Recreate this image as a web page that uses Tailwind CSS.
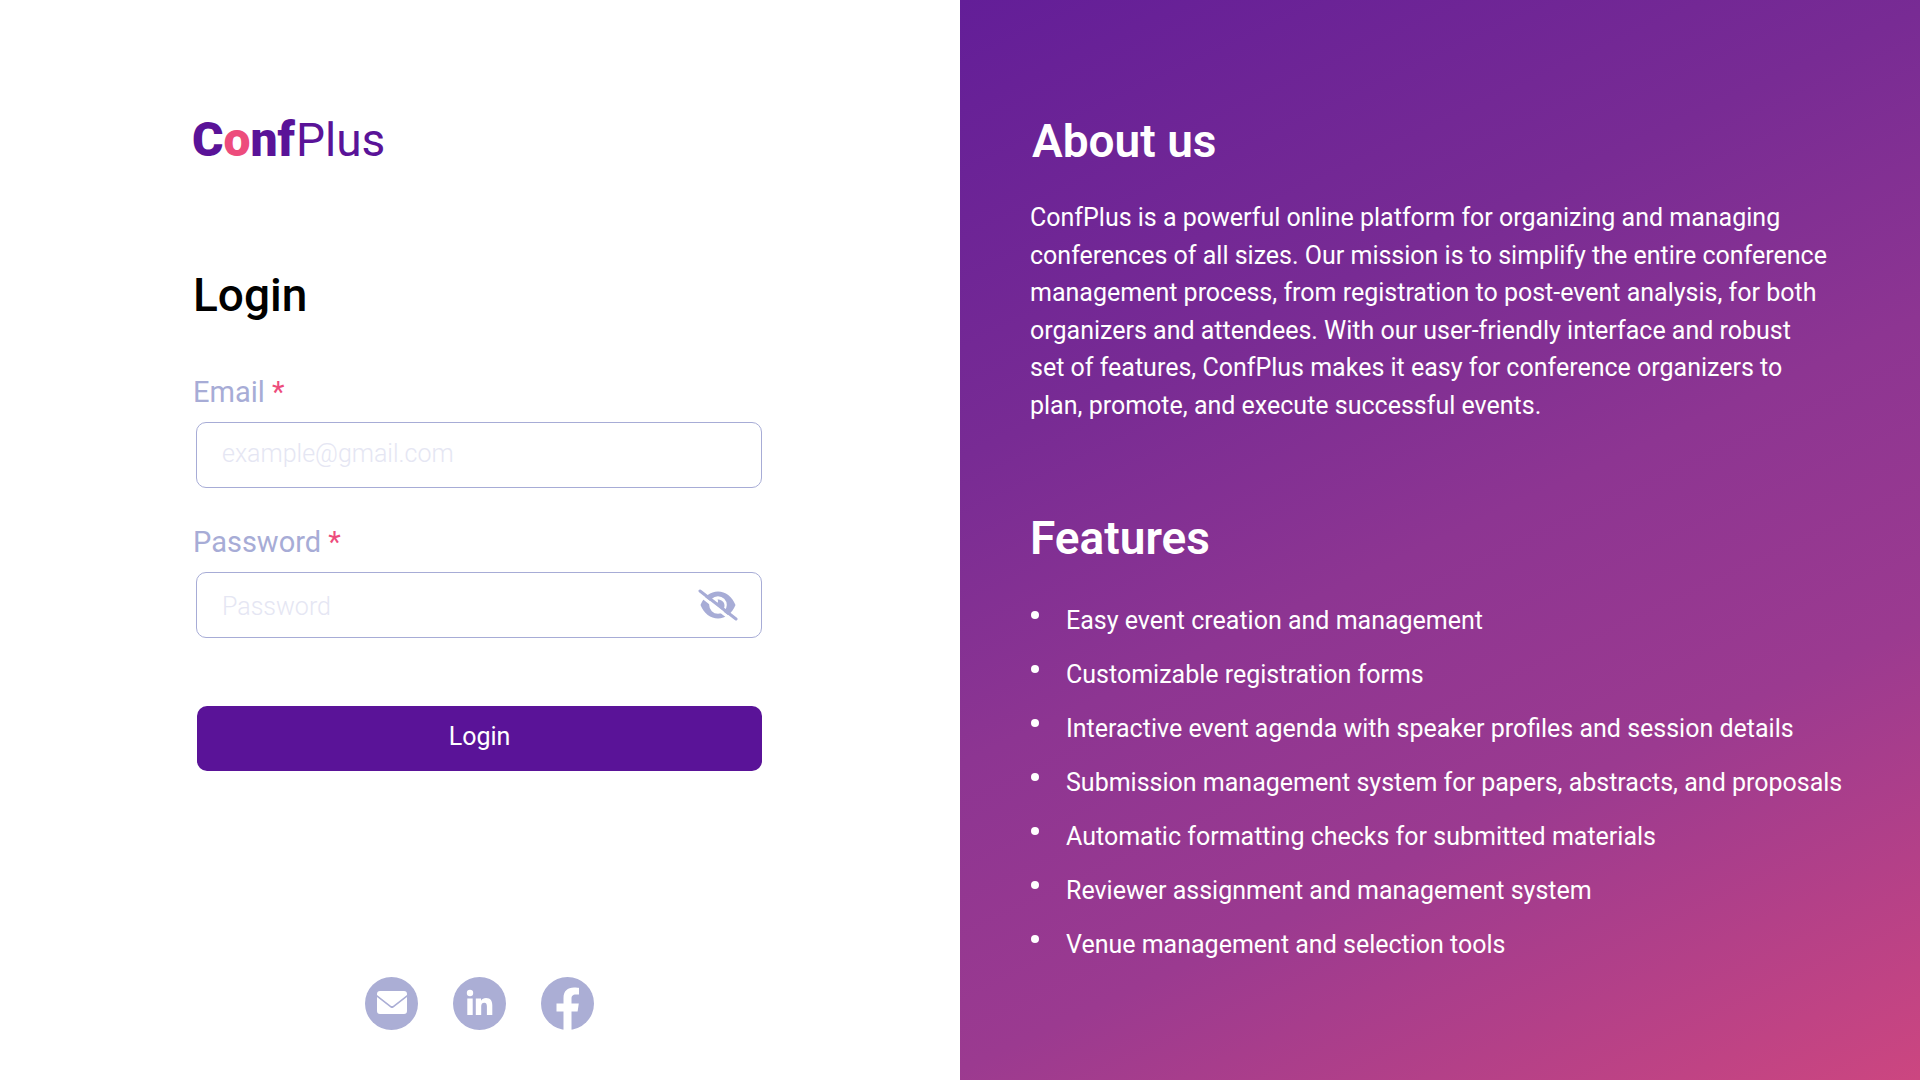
<!DOCTYPE html>
<html lang="en">
<head>
<meta charset="utf-8">
<meta name="viewport" content="width=device-width, initial-scale=1">
<title>ConfPlus – Login</title>
<script src="https://cdn.jsdelivr.net/npm/@tailwindcss/browser@4"></script>
</head>
<body class="bg-white font-[Roboto,sans-serif]">
<div class="grid min-h-screen grid-cols-2">

  <main class="flex flex-col pt-28 pr-[198px] pb-[50px] pl-48">
    <a href="#" aria-label="ConfPlus home" class="flex items-baseline gap-px self-start text-[46px] leading-14 text-[#5a1398]"><span class="text-[48px] font-black">C<span class="text-[#ed4c7c]">o</span>nf</span><span>Plus</span></a>

    <form class="mt-[99px] flex flex-col">
      <h1 class="pl-px text-[46px] leading-14 font-medium text-black">Login</h1>

      <label for="email" class="mt-[51px] pl-px text-[29px] leading-9 text-[#a7acd6]">Email <span class="text-[#ed4c7c]">*</span></label>
      <input id="email" type="email" placeholder="example@gmail.com" class="mt-[12px] ml-1 h-[66px] rounded-[10px] border border-[#a7acd6] px-[25px] pb-1 text-[25px] font-light text-[#5a1398] placeholder:text-[#e5e6f3]">

      <label for="password" class="mt-9 pl-px text-[29px] leading-9 text-[#a7acd6]">Password <span class="text-[#ed4c7c]">*</span></label>
      <div class="mt-[12px] ml-1 flex h-[66px] items-center rounded-[10px] border border-[#a7acd6] pr-[23px] pl-[25px]">
        <input id="password" type="password" placeholder="Password" class="min-w-0 flex-1 pt-1 text-[25px] font-light text-[#5a1398] placeholder:text-[#e5e6f3]">
        <button type="button" aria-label="Show password">
          <svg class="h-8 w-10" viewBox="0 0 40 32">
            <path fill="#a7acd6" fill-rule="evenodd" d="M2.500 16C6 7.500 12.500 2.500 20 2.500S34 7.500 37.500 16C34 24.500 27.500 29.500 20 29.500S6 24.500 2.500 16ZM20 7.200a8.800 8.800 0 1 0 0 17.600a8.800 8.800 0 0 0 0-17.600Z"/>
            <path fill="#a7acd6" d="M19.500 10.500c4 0 7 2.500 7 6 0 2-.8 3.500-2 4.500L16 14c1.500 1 4 .5 4-1.500 0-.8 0-1.400-.5-2Z"/>
            <path stroke="#fff" stroke-width="3" d="M0 4.500L37 33.500"/>
            <path stroke="#a7acd6" stroke-width="3" stroke-linecap="round" d="M2 2L38 30"/>
          </svg>
        </button>
      </div>

      <button type="submit" class="mt-[68px] ml-[5px] h-[65px] rounded-[10px] bg-[#5a1398] pb-1 text-[25px] text-white">Login</button>
    </form>

    <nav aria-label="Contact" class="mt-auto flex justify-center gap-[35px] pl-1">
      <a href="#" aria-label="Email">
        <svg class="size-[53px]" viewBox="0 0 53 53">
          <circle cx="26.500" cy="26.500" r="26.500" fill="#abaed5"/>
          <path fill="#fff" d="M15 14h24a3 3 0 0 1 3 3v1L28.500 28.500q-1.500 1.200-3 0L12 18v-1a3 3 0 0 1 3-3Z"/>
          <path fill="#fff" d="M12 20l13.500 10.500q1.500 1.200 3 0L42 20v14a3 3 0 0 1-3 3H15a3 3 0 0 1-3-3Z"/>
        </svg>
      </a>
      <a href="#" aria-label="LinkedIn">
        <svg class="size-[53px]" viewBox="0 0 53 53">
          <circle cx="26.500" cy="26.500" r="26.500" fill="#abaed5"/>
          <circle cx="17" cy="16" r="3.200" fill="#fff"/>
          <path fill="#fff" d="M14.300 21.500h5.400V38h-5.400ZM22.800 21.500H28v2.300c1-1.700 2.800-2.700 5-2.700 4.800 0 6.300 3 6.300 7.400V38h-5.400v-8.500c0-2.200-.5-3.800-2.600-3.800-2.300 0-3.100 1.600-3.100 3.900V38h-5.400Z"/>
        </svg>
      </a>
      <a href="#" aria-label="Facebook">
        <svg class="size-[53px]" viewBox="0 0 53 53">
          <circle cx="26.500" cy="26.500" r="26.500" fill="#abaed5"/>
          <path fill="#fff" d="M22.500 53V34.500h-7v-8h7v-5.500c0-7 4-10.500 10.500-10.500 2.500 0 5 .4 5 .4v6.500h-3c-3.500 0-4.500 2-4.500 4v5.100h7.300l-1.200 8h-6.100V53Z"/>
        </svg>
      </a>
    </nav>
  </main>

  <aside class="flex flex-col bg-[linear-gradient(155deg,#631e98,#782b94_30%,#8d3592_50%,#9b3a90_70%,#cc4680)] pt-[113px] pr-16 pl-[70px] text-white">
    <section>
      <h2 class="pl-[2px] text-[46px] leading-14 font-semibold">About us</h2>
      <p class="mt-[30px] max-w-[799px] text-[25px] leading-[1.5]">ConfPlus is a powerful online platform for organizing and managing conferences of all sizes. Our mission is to simplify the entire conference management process, from registration to post-event analysis, for both organizers and attendees. With our user-friendly interface and robust set of features, ConfPlus makes it easy for conference organizers to plan, promote, and execute successful events.</p>
    </section>
    <section class="mt-[86px]">
      <h2 class="text-[46px] leading-14 font-semibold">Features</h2>
      <ul class="mt-7 text-[25px] leading-[54px] whitespace-nowrap">
        <li class="flex gap-[27px]"><span class="mt-[17px] ml-px size-2 rounded-full bg-white"></span>Easy event creation and management</li>
        <li class="flex gap-[27px]"><span class="mt-[17px] ml-px size-2 rounded-full bg-white"></span>Customizable registration forms</li>
        <li class="flex gap-[27px]"><span class="mt-[17px] ml-px size-2 rounded-full bg-white"></span>Interactive event agenda with speaker profiles and session details</li>
        <li class="flex gap-[27px]"><span class="mt-[17px] ml-px size-2 rounded-full bg-white"></span>Submission management system for papers, abstracts, and proposals</li>
        <li class="flex gap-[27px]"><span class="mt-[17px] ml-px size-2 rounded-full bg-white"></span>Automatic formatting checks for submitted materials</li>
        <li class="flex gap-[27px]"><span class="mt-[17px] ml-px size-2 rounded-full bg-white"></span>Reviewer assignment and management system</li>
        <li class="flex gap-[27px]"><span class="mt-[17px] ml-px size-2 rounded-full bg-white"></span>Venue management and selection tools</li>
      </ul>
    </section>
  </aside>
</div>
</body>
</html>
